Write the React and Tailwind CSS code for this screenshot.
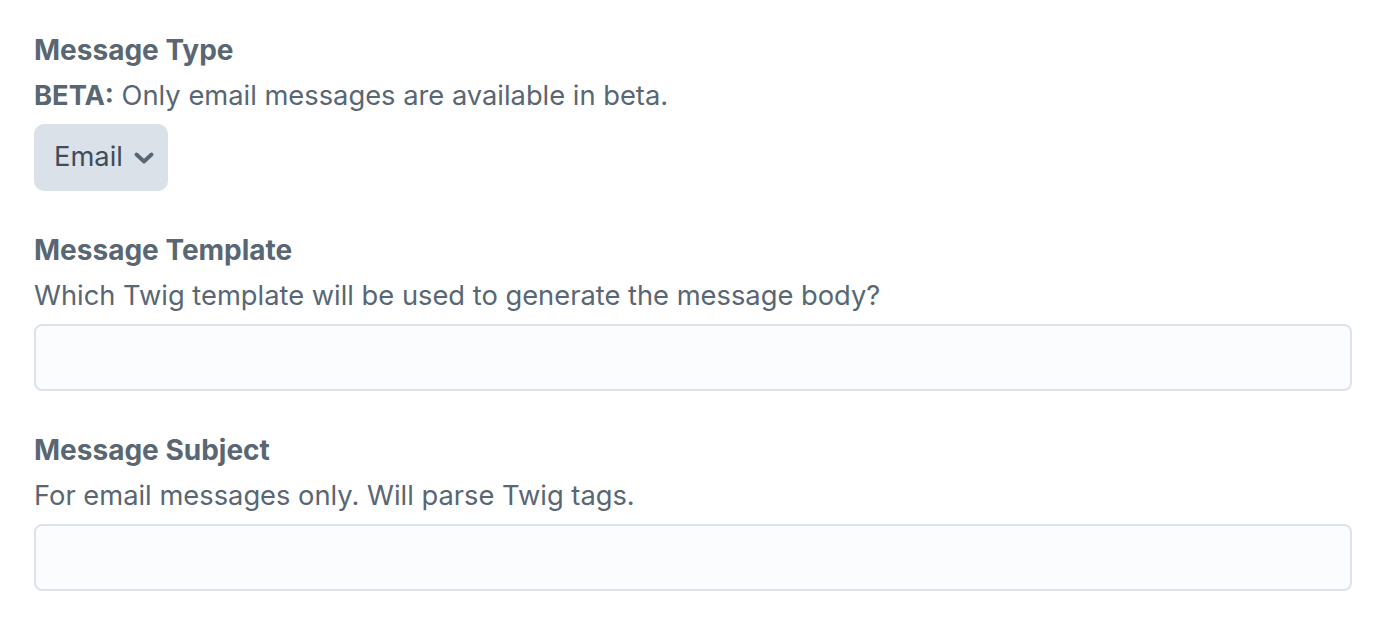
import React from 'react';

const Field = ({ label, children, instructions }) => (
  <div className="flex flex-col">
    <div className="h-[40px] leading-[40px] text-[28px] font-bold text-[#596673]">{label}</div>
    <div className="mt-[6px] h-[40px] leading-[40px] text-[27.3px] text-[#596673]">{instructions}</div>
    <div className="mt-[8px]">{children}</div>
  </div>
);

const TextInput = () => (
  <input
    type="text"
    className="block w-full h-[67px] rounded-[8px] border-2 border-[#dde3ea] bg-[#fbfcfe] px-5 text-[27px] text-[#3f4d5a] outline-none"
  />
);

export default function App() {
  return (
    <div
      className="min-h-screen bg-white px-[34px] pt-[30px] flex flex-col gap-[39px]"
      style={{ fontFamily: 'Inter, "Noto Sans", sans-serif' }}
    >
      <Field
        label="Message Type"
        instructions={
          <>
            <span className="font-bold">BETA:</span> Only email messages are available in beta.
          </>
        }
      >
        <div className="inline-flex h-[67px] items-center gap-[11px] rounded-[10px] bg-[#dae1e8] pl-[20px] pr-[14px] text-[27.3px] text-[#3f4d5a]">
          <span>Email</span>
          <svg width="20" height="12" viewBox="0 0 20 12" fill="none">
            <path d="M2.5 2.5 L10 9.5 L17.5 2.5" stroke="#596673" strokeWidth="3.8" strokeLinecap="round" strokeLinejoin="round" />
          </svg>
        </div>
      </Field>
      <Field label="Message Template" instructions="Which Twig template will be used to generate the message body?">
        <TextInput />
      </Field>
      <Field label="Message Subject" instructions="For email messages only. Will parse Twig tags.">
        <TextInput />
      </Field>
    </div>
  );
}
